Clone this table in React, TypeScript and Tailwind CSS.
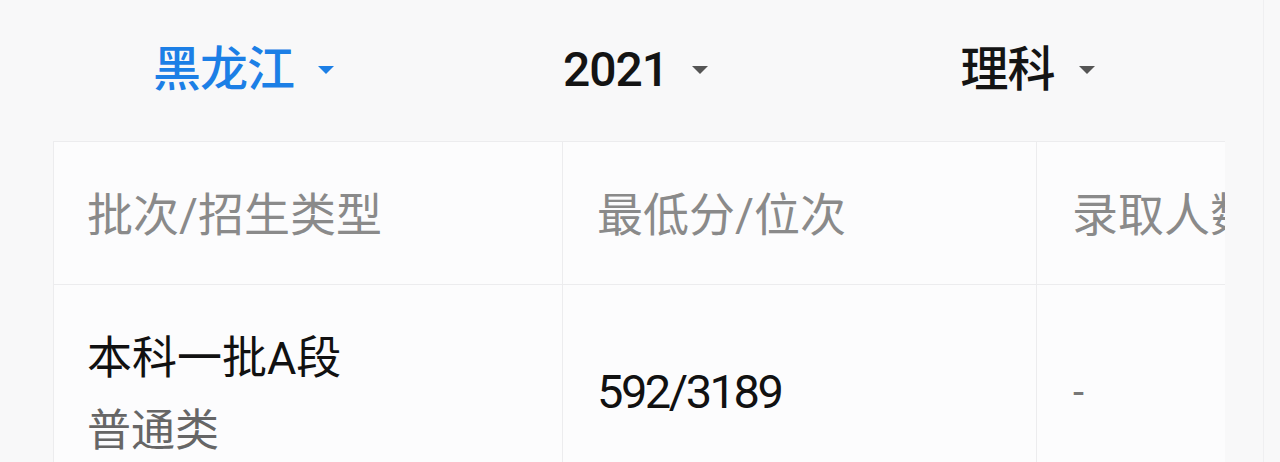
import React from "react";

const filters = [
  { label: "黑龙江", active: true },
  { label: "2021", active: false },
  { label: "理科", active: false },
];

const Caret = ({ className }: { className: string }) => (
  <svg viewBox="0 0 18 10" className={className} fill="currentColor">
    <path d="M1 1h16l-8 8z" />
  </svg>
);

export default function App() {
  return (
    <div
      className="w-[1280px] h-[462px] overflow-hidden bg-[#f8f8f9] flex"
      style={{ fontFamily: "Roboto, 'Noto Sans CJK SC', sans-serif" }}
    >
      <div className="w-[1264px] shrink-0 border-r border-[#efeff1] flex flex-col pl-[48px] pr-[39px]">
        {/* filter bar */}
        <div className="grid grid-cols-3 h-[141px] shrink-0">
          {filters.map((f, i) => (
            <div key={i} className="flex items-center justify-center gap-[23px] pb-[2px]">
              <span
                className={`text-[48px] font-medium tracking-[-1px] ${
                  f.active ? "text-[#1c7fe6]" : "text-[#141414]"
                }`}
              >
                {f.label}
              </span>
              <Caret className={`w-[18px] h-[10px] ${f.active ? "text-[#1c7fe6]" : "text-[#555555]"}`} />
            </div>
          ))}
        </div>

        {/* table */}
        <div className="ml-[5px] w-[1172px] shrink-0 overflow-hidden bg-[#fcfcfd] border-t border-l border-[#ececee]">
          <div className="flex w-[1400px]">
            <div className="w-[509px] shrink-0 flex flex-col">
              <div className="h-[143px] border-b border-r border-[#ececee] flex items-center pl-[33px] text-[46px] text-[#8a8a8a] pt-[5px]">
                批次/招生类型
              </div>
              <div className="h-[220px] border-r border-[#ececee] flex flex-col justify-center pl-[33px] leading-[72px]">
                <span className="text-[45px] text-[#111111]">本科一批A段</span>
                <span className="text-[44px] text-[#666666]">普通类</span>
              </div>
            </div>
            <div className="w-[474px] shrink-0 flex flex-col">
              <div className="h-[143px] border-b border-r border-[#ececee] flex items-center pl-[34px] text-[46px] text-[#8a8a8a] pt-[5px]">
                最低分/位次
              </div>
              <div className="h-[220px] border-r border-[#ececee] flex items-center pl-[34px] pb-[6px]">
                <span className="text-[47px] tracking-[-2.5px] text-[#111111]">592/3189</span>
              </div>
            </div>
            <div className="w-[400px] shrink-0 flex flex-col">
              <div className="h-[143px] border-b border-[#ececee] flex items-center pl-[35px] text-[46px] text-[#8a8a8a] pt-[5px] whitespace-nowrap">
                录取人数
              </div>
              <div className="h-[220px] flex items-center pl-[36px] pb-[4px]">
                <span className="text-[40px] text-[#777777]">-</span>
              </div>
            </div>
          </div>
        </div>
      </div>
    </div>
  );
}
